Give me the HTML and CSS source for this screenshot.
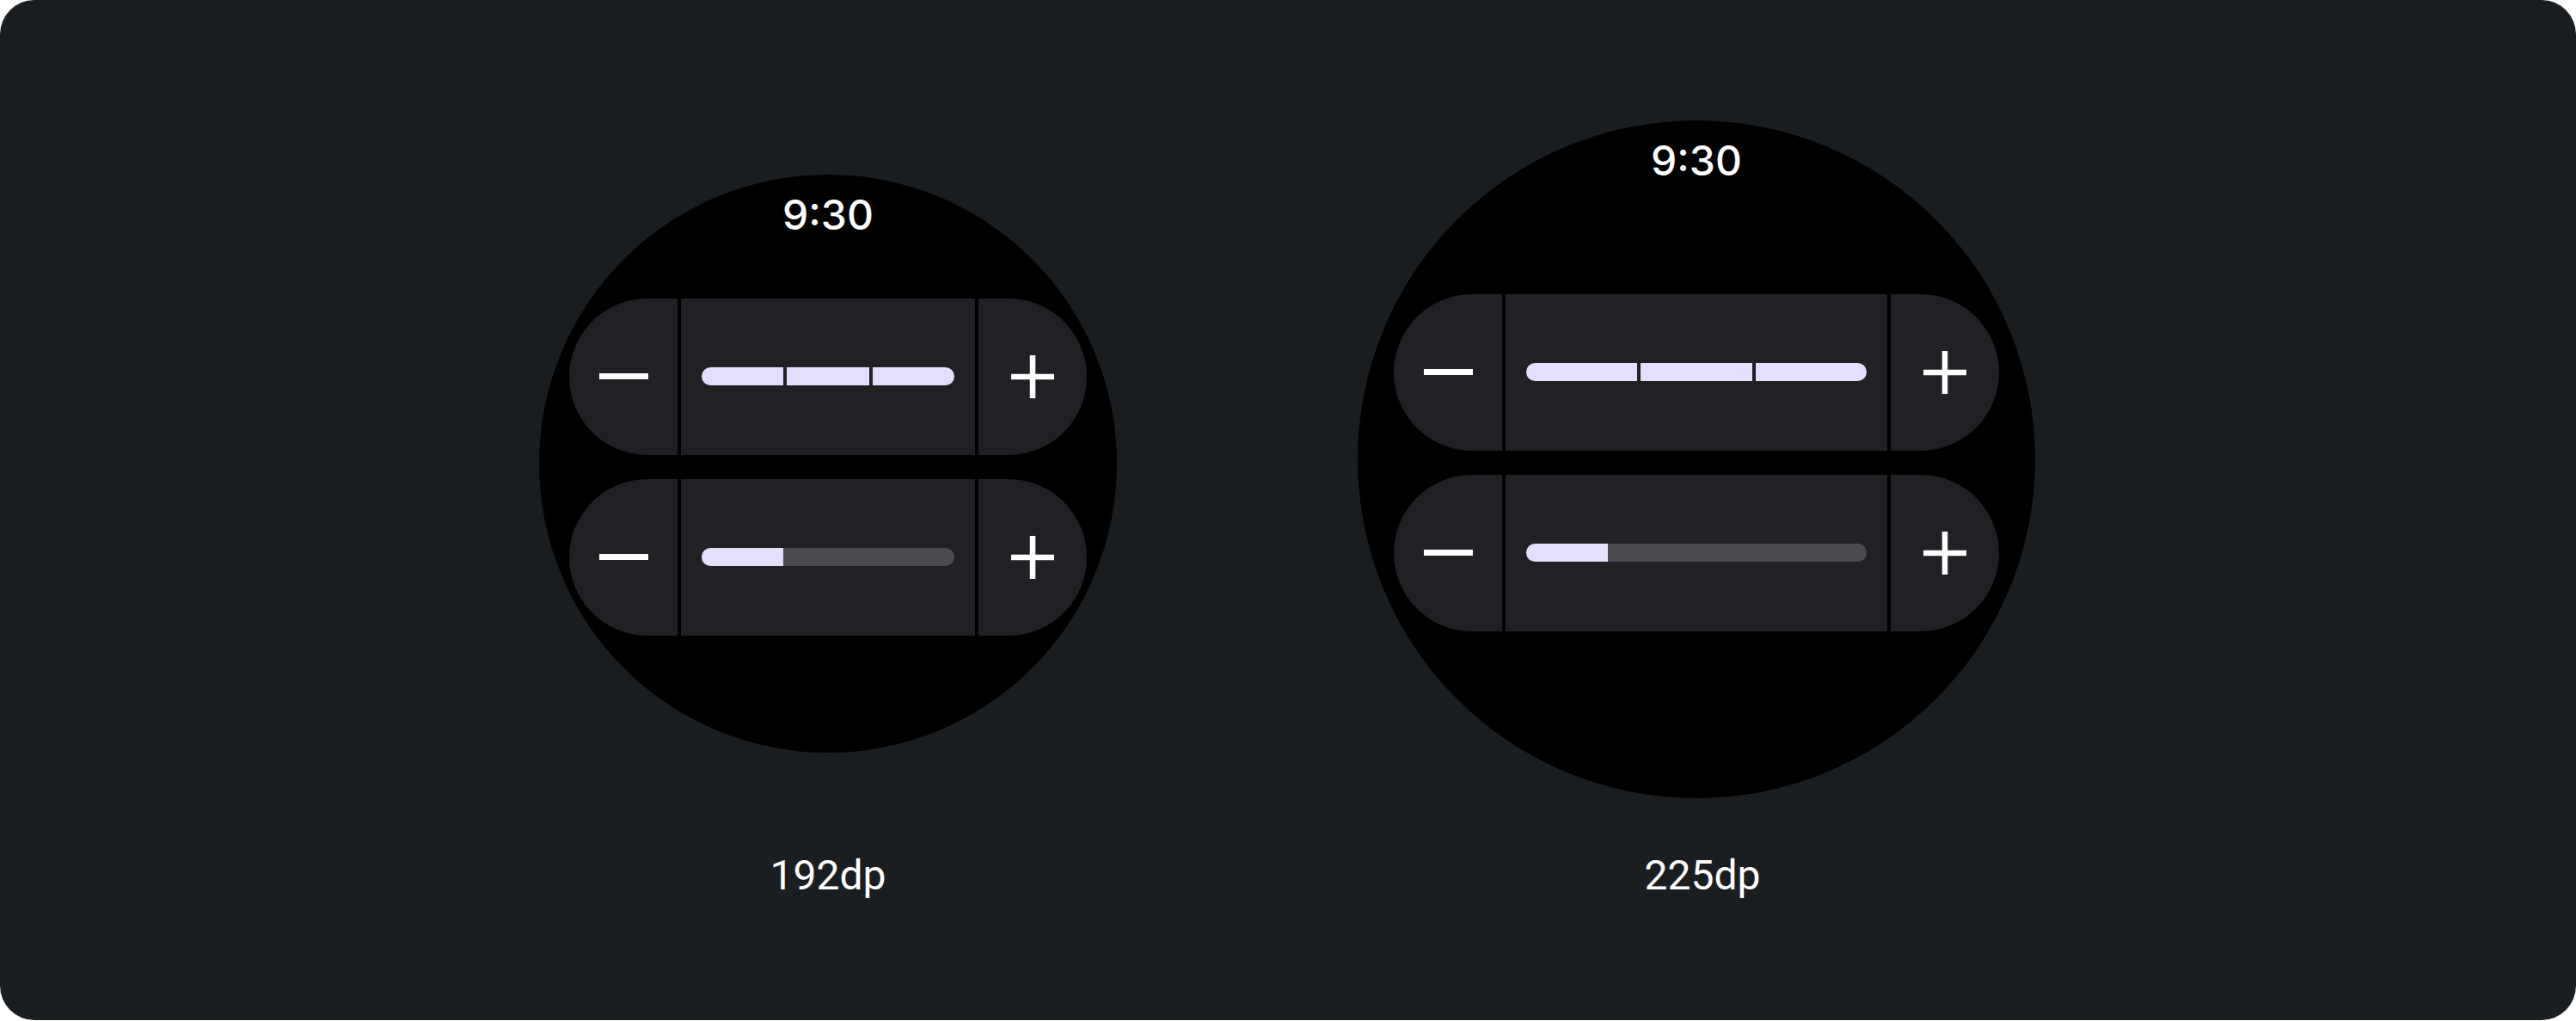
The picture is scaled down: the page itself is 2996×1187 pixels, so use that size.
FILE: index.html
```html
<!DOCTYPE html>
<html lang="en">
<head>
  <meta charset="UTF-8">
  <title>Stepper sizes</title>
  <link rel="stylesheet" href="styles.css">
</head>
<body>

  <div class="panel">
    <div class="showcase">

      <div class="watch watch-small">
        <div class="time">9:30</div>
        <div class="controls">
          <div class="stepper">
            <button class="step step-minus" aria-label="Decrease">
              <svg width="57" height="7" viewBox="0 0 57 7"><rect width="57" height="7" fill="#fff"/></svg>
            </button>
            <div class="level">
              <div class="bar bar-segmented"><span></span><span></span><span></span></div>
            </div>
            <button class="step step-plus" aria-label="Increase">
              <svg width="50" height="50" viewBox="0 0 50 50"><rect x="21.75" width="6.5" height="50" fill="#fff"/><rect y="21.75" width="50" height="6.5" fill="#fff"/></svg>
            </button>
          </div>
          <div class="stepper">
            <button class="step step-minus" aria-label="Decrease">
              <svg width="57" height="7" viewBox="0 0 57 7"><rect width="57" height="7" fill="#fff"/></svg>
            </button>
            <div class="level">
              <div class="bar bar-progress"><span class="fill" style="width: 95px"></span></div>
            </div>
            <button class="step step-plus" aria-label="Increase">
              <svg width="50" height="50" viewBox="0 0 50 50"><rect x="21.75" width="6.5" height="50" fill="#fff"/><rect y="21.75" width="50" height="6.5" fill="#fff"/></svg>
            </button>
          </div>
        </div>
      </div>
      <div class="caption">192dp</div>

      <div class="watch watch-large">
        <div class="time">9:30</div>
        <div class="controls">
          <div class="stepper">
            <button class="step step-minus" aria-label="Decrease">
              <svg width="57" height="7" viewBox="0 0 57 7"><rect width="57" height="7" fill="#fff"/></svg>
            </button>
            <div class="level">
              <div class="bar bar-segmented"><span></span><span></span><span></span></div>
            </div>
            <button class="step step-plus" aria-label="Increase">
              <svg width="50" height="50" viewBox="0 0 50 50"><rect x="21.75" width="6.5" height="50" fill="#fff"/><rect y="21.75" width="50" height="6.5" fill="#fff"/></svg>
            </button>
          </div>
          <div class="stepper">
            <button class="step step-minus" aria-label="Decrease">
              <svg width="57" height="7" viewBox="0 0 57 7"><rect width="57" height="7" fill="#fff"/></svg>
            </button>
            <div class="level">
              <div class="bar bar-progress"><span class="fill" style="width: 95px"></span></div>
            </div>
            <button class="step step-plus" aria-label="Increase">
              <svg width="50" height="50" viewBox="0 0 50 50"><rect x="21.75" width="6.5" height="50" fill="#fff"/><rect y="21.75" width="50" height="6.5" fill="#fff"/></svg>
            </button>
          </div>
        </div>
      </div>
      <div class="caption caption-large">225dp</div>

    </div>
  </div>

</body>
</html>
```

FILE: styles.css
```css
body {
  margin: 0;
  background: #fff;
  font-family: Roboto, "Noto Sans", sans-serif;
}
.panel {
  height: 1186px;
  background: #1b1e21;
  border-radius: 40px;
  padding-top: 140px;
  box-sizing: border-box;
}
.showcase {
  display: grid;
  grid-template-rows: 788px auto;
  grid-auto-flow: column;
  grid-auto-columns: auto;
  justify-content: center;
  column-gap: 280px;
  row-gap: 62px;
  margin-left: -2px;
}
.watch {
  display: grid;
  place-items: center;
  align-self: center;
  background: #000;
  border-radius: 50%;
}
.watch-small {
  width: 672px;
  height: 672px;
  margin-top: 10px;
}
.watch-large {
  width: 788px;
  height: 788px;
}
.time {
  grid-area: 1 / 1;
  align-self: start;
  margin-top: 23px;
  font-family: Inter, Roboto, sans-serif;
  font-size: 48px;
  font-weight: 500;
  line-height: 48px;
  color: #fff;
}
.controls {
  grid-area: 1 / 1;
  display: flex;
  flex-direction: column;
  gap: 28px;
  margin-top: 7px;
}
.watch-small .controls {
  width: 602px;
}
.watch-large .controls {
  width: 704px;
}
.stepper {
  display: flex;
  gap: 4px;
  height: 182px;
}
.step {
  width: 126px;
  padding: 0;
  border: none;
  background: #202124;
  display: flex;
  align-items: center;
  justify-content: center;
}
.step-minus {
  border-radius: 91px 0 0 91px;
}
.step-plus {
  border-radius: 0 91px 91px 0;
}
.level {
  flex: 1;
  background: #202124;
  padding: 0 24px;
  display: flex;
  align-items: center;
}
.bar {
  flex: 1;
  height: 21px;
  border-radius: 10.5px;
  overflow: hidden;
  display: flex;
}
.bar-segmented {
  gap: 4px;
}
.bar-segmented span {
  flex: 1;
  background: #e4dffd;
}
.bar-progress {
  background: #4b4b4f;
}
.bar-progress .fill {
  background: #e4dffd;
}
.caption {
  justify-self: center;
  font-size: 48px;
  line-height: 56px;
  color: #fff;
}
.caption-large {
  padding-left: 14px;
}
```
